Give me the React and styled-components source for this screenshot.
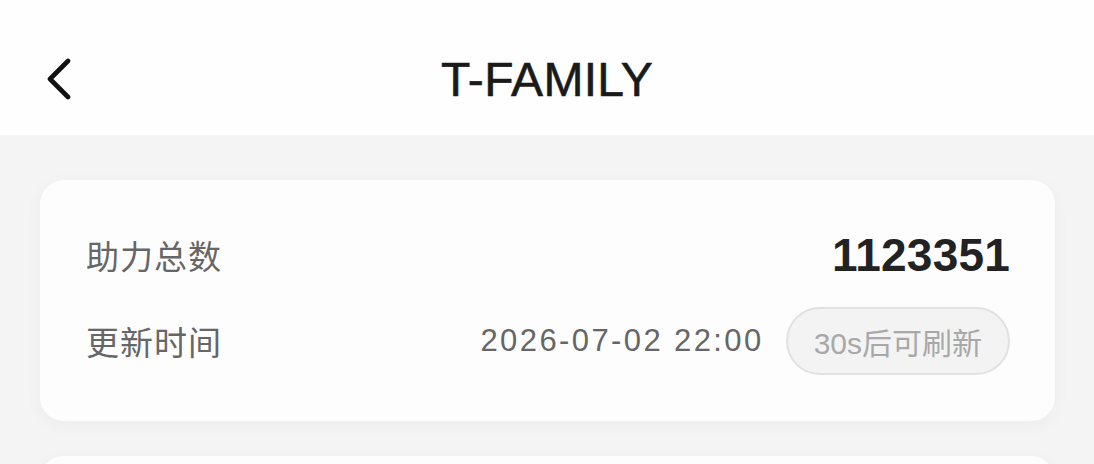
import React from "react";
import styled, { createGlobalStyle } from "styled-components";

const GlobalStyle = createGlobalStyle`
  html, body {
    margin: 0;
    padding: 0;
    background: #f4f4f4;
    font-family: "Liberation Sans", "Noto Sans CJK SC", sans-serif;
  }
`;

const Page = styled.div`
  width: 1094px;
  height: 464px;
  overflow: hidden;
  background: #f4f4f4;
`;

const Header = styled.header`
  height: 135px;
  box-sizing: border-box;
  padding-top: 24px;
  background: #fefefe;
  display: grid;
  grid-template-columns: 1fr auto 1fr;
  align-items: center;
`;

const BackButton = styled.button`
  justify-self: start;
  margin-left: 42px;
  width: 34px;
  height: 46px;
  padding: 0;
  border: none;
  background: none;
  display: flex;
  align-items: center;
  justify-content: center;
  cursor: pointer;
`;

const Title = styled.h1`
  margin: 0;
  font-family: "Liberation Sans", Arial, sans-serif;
  font-weight: 400;
  font-size: 48px;
  color: #1a1a1a;
  letter-spacing: 0.3px;
  -webkit-text-stroke: 0.6px #1a1a1a;
`;

const Content = styled.main`
  padding: 45px 39px 0 40px;
  display: flex;
  flex-direction: column;
  gap: 35px;
`;

const Card = styled.section`
  background: #fdfdfd;
  border-radius: 24px;
  padding: ${(p) => (p.$stub ? "0" : "40px 45px 45px 46px")};
  height: ${(p) => (p.$stub ? "60px" : "auto")};
  box-shadow: 0 4px 18px rgba(0, 0, 0, 0.035);
  display: flex;
  flex-direction: column;
  gap: 16px;
`;

const Row = styled.div`
  height: 70px;
  display: flex;
  align-items: center;
  justify-content: space-between;
`;

const Label = styled.span`
  font-family: "Noto Sans CJK SC", sans-serif;
  font-size: 33px;
  color: #666;
  letter-spacing: 1px;
`;

const Total = styled.span`
  font-family: "Liberation Sans", Arial, sans-serif;
  font-weight: 700;
  font-size: 46px;
  color: #222;
  letter-spacing: 0.2px;
`;

const Meta = styled.div`
  display: flex;
  align-items: center;
  gap: 22px;
`;

const Time = styled.span`
  font-family: "Liberation Sans", Arial, sans-serif;
  font-size: 31px;
  color: #666;
  letter-spacing: 2.4px;
`;

const RefreshPill = styled.button`
  height: 68px;
  padding: 0 26px;
  border-radius: 34px;
  border: 2px solid #e1e1e1;
  background: #f3f3f3;
  color: #a8a8a8;
  font-family: "Liberation Sans", "Noto Sans CJK SC", sans-serif;
  font-size: 30px;
  display: flex;
  align-items: center;
  cursor: default;
`;

function Chevron() {
  return (
    <svg width="30" height="44" viewBox="0 0 30 44" fill="none">
      <path
        d="M24 3 L6 21 L24 39"
        stroke="#111"
        strokeWidth="4.6"
        strokeLinecap="round"
        strokeLinejoin="round"
      />
    </svg>
  );
}

export default function App() {
  return (
    <Page>
      <GlobalStyle />
      <Header>
        <BackButton aria-label="返回">
          <Chevron />
        </BackButton>
        <Title>T-FAMILY</Title>
        <span />
      </Header>
      <Content>
        <Card>
          <Row>
            <Label>助力总数</Label>
            <Total>1123351</Total>
          </Row>
          <Row>
            <Label>更新时间</Label>
            <Meta>
              <Time>2026-07-02 22:00</Time>
              <RefreshPill disabled>30s后可刷新</RefreshPill>
            </Meta>
          </Row>
        </Card>
        <Card $stub />
      </Content>
    </Page>
  );
}
